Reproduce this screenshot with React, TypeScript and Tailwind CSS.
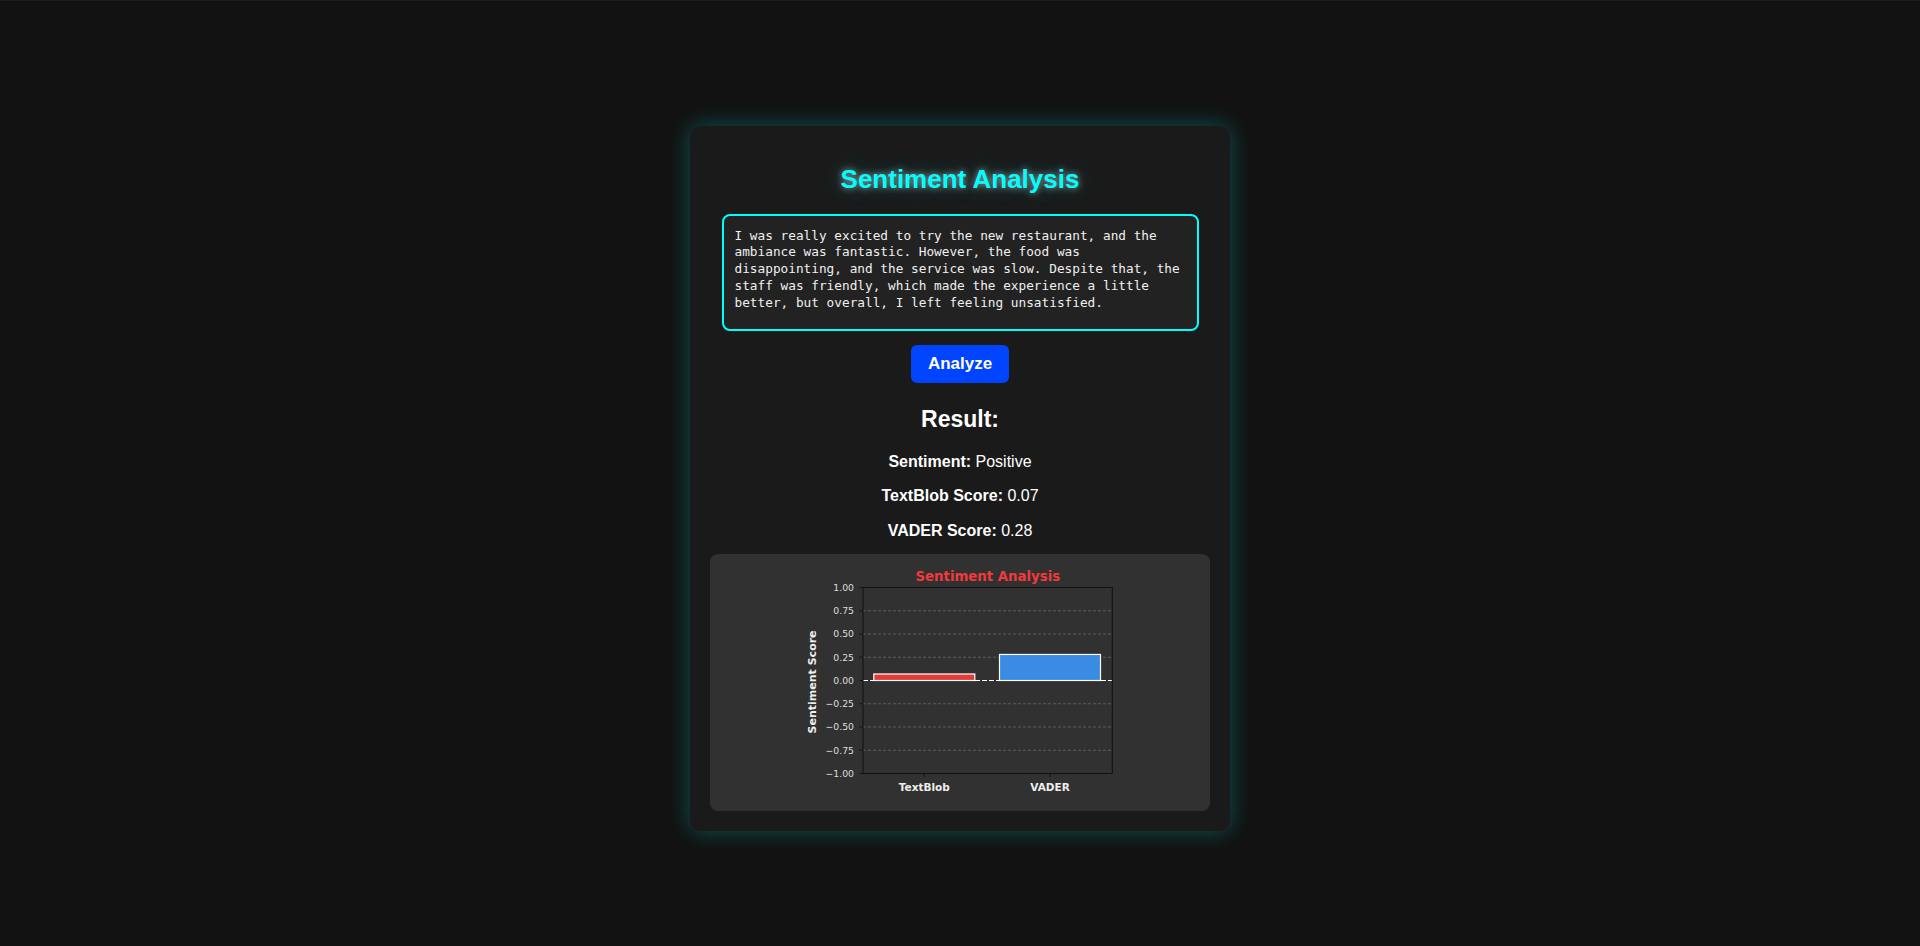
import { useState } from "react";

const TICKS = [1, 0.75, 0.5, 0.25, 0, -0.25, -0.5, -0.75, -1];

// axes box inside the chart svg
const X0 = 73;
const X1 = 322.3;
const yOf = (v: number) => 118.5 - v * 93;

const fmt = (v: number) => (v < 0 ? "\u2212" + Math.abs(v).toFixed(2) : v.toFixed(2));

const ScoreChart = ({ textblob, vader }: { textblob: number; vader: number }) => {
  const bars = [
    { label: "TextBlob", cx: 134.3, value: textblob, fill: "#e33b38" },
    { label: "VADER", cx: 260, value: vader, fill: "#3a8be2" },
  ];

  return (
    <svg width="340" height="240" viewBox="0 0 340 240" className="block">
      <text
        x="197.8"
        y="19.2"
        textAnchor="middle"
        fill="#f23a3a"
        fontSize="13.3"
        fontWeight="bold"
        fontFamily="'DejaVu Sans', sans-serif"
      >
        Sentiment Analysis
      </text>

      {/* grid */}
      {TICKS.filter((t) => Math.abs(t) !== 1 && t !== 0).map((t) => (
        <line
          key={t}
          x1={X0}
          x2={X1}
          y1={yOf(t)}
          y2={yOf(t)}
          stroke="#7a7a7a"
          strokeOpacity="0.75"
          strokeWidth="0.8"
          strokeDasharray="3 2"
        />
      ))}

      {/* bars */}
      {bars.map((b) => (
        <rect
          key={b.label}
          x={b.cx - 50.5}
          y={yOf(b.value)}
          width="101"
          height={b.value * 93}
          fill={b.fill}
          stroke="#ffffff"
          strokeWidth="1.2"
        />
      ))}

      {/* zero line */}
      <line x1={X0} x2={X1} y1={yOf(0)} y2={yOf(0)} stroke="#ffffff" strokeWidth="1" strokeDasharray="5 2" />

      {/* spines */}
      <rect x={X0} y={yOf(1)} width={X1 - X0} height={186} fill="none" stroke="#111111" strokeWidth="1" />

      {/* y ticks */}
      {TICKS.map((t) => (
        <g key={t}>
          <line x1={X0 - 3.5} x2={X0} y1={yOf(t)} y2={yOf(t)} stroke="#111111" strokeWidth="0.9" />
          <text
            x="64"
            y={yOf(t) + 3.3}
            textAnchor="end"
            fill="#dddddd"
            fontSize="9.3"
            fontFamily="'DejaVu Sans', sans-serif"
          >
            {fmt(t)}
          </text>
        </g>
      ))}

      {/* x ticks */}
      {bars.map((b) => (
        <g key={b.label}>
          <line x1={b.cx} x2={b.cx} y1="211.5" y2="215" stroke="#111111" strokeWidth="0.9" />
          <text
            x={b.cx}
            y="228.7"
            textAnchor="middle"
            fill="#eeeeee"
            fontSize="10.5"
            fontWeight="bold"
            fontFamily="'DejaVu Sans', sans-serif"
          >
            {b.label}
          </text>
        </g>
      ))}

      <text
        transform="translate(22.3 119.9) rotate(-90)"
        x="0"
        y="4"
        textAnchor="middle"
        fill="#eeeeee"
        fontSize="11"
        fontWeight="bold"
        fontFamily="'DejaVu Sans', sans-serif"
      >
        Sentiment Score
      </text>
    </svg>
  );
};

const App = () => {
  const [text, setText] = useState(
    "I was really excited to try the new restaurant, and the ambiance was fantastic. However, the food was disappointing, and the service was slow. Despite that, the staff was friendly, which made the experience a little better, but overall, I left feeling unsatisfied."
  );

  return (
    <div className="min-h-screen bg-[#121212] border-t border-[#1d1d1d] pt-[9px] flex items-center justify-center font-['Liberation_Sans',Arial,sans-serif]">
      <div className="w-[540px] rounded-[10px] bg-[#1a1a1a] p-[20px] flex flex-col items-center shadow-[0_0_22px_rgba(0,255,255,0.28)]">
        {/* Header */}
        <h1 className="mt-[18px] text-[26px] leading-[30px] font-bold text-[#00ffff] [text-shadow:0_0_7px_rgba(255,255,255,0.6),0_0_22px_rgba(0,255,255,0.3)]">
          Sentiment Analysis
        </h1>

        <textarea
          value={text}
          onChange={(e) => setText(e.target.value)}
          spellCheck={false}
          className="mt-[20px] w-[477px] h-[117px] resize-none overflow-hidden rounded-[8px] border-2 border-[#00ffff] bg-[#222222] text-[#f0f0f0] font-['DejaVu_Sans_Mono',monospace] text-[12.75px] leading-[16.8px] pt-[12px] pl-[11px] pr-[11px] outline-none"
        />

        <button className="mt-[14px] h-[38px] px-[17px] rounded-[6px] bg-[#0044ff] text-white text-[17px] font-bold leading-none">
          Analyze
        </button>

        {/* Result */}
        <h2 className="mt-[23px] text-[23px] leading-[26px] font-bold text-white">Result:</h2>
        <p className="mt-[21.5px] text-[16px] leading-[18px] text-white">
          <strong>Sentiment:</strong> Positive
        </p>
        <p className="mt-[16px] text-[16px] leading-[18px] text-white">
          <strong>TextBlob Score:</strong> 0.07
        </p>
        <p className="mt-[16.5px] text-[16px] leading-[18px] text-white">
          <strong>VADER Score:</strong> 0.28
        </p>

        <div className="mt-[14px] w-[500px] h-[257px] rounded-[8px] bg-[#313131] flex items-center justify-center">
          <ScoreChart textblob={0.07} vader={0.28} />
        </div>
      </div>
    </div>
  );
};

export default App;
